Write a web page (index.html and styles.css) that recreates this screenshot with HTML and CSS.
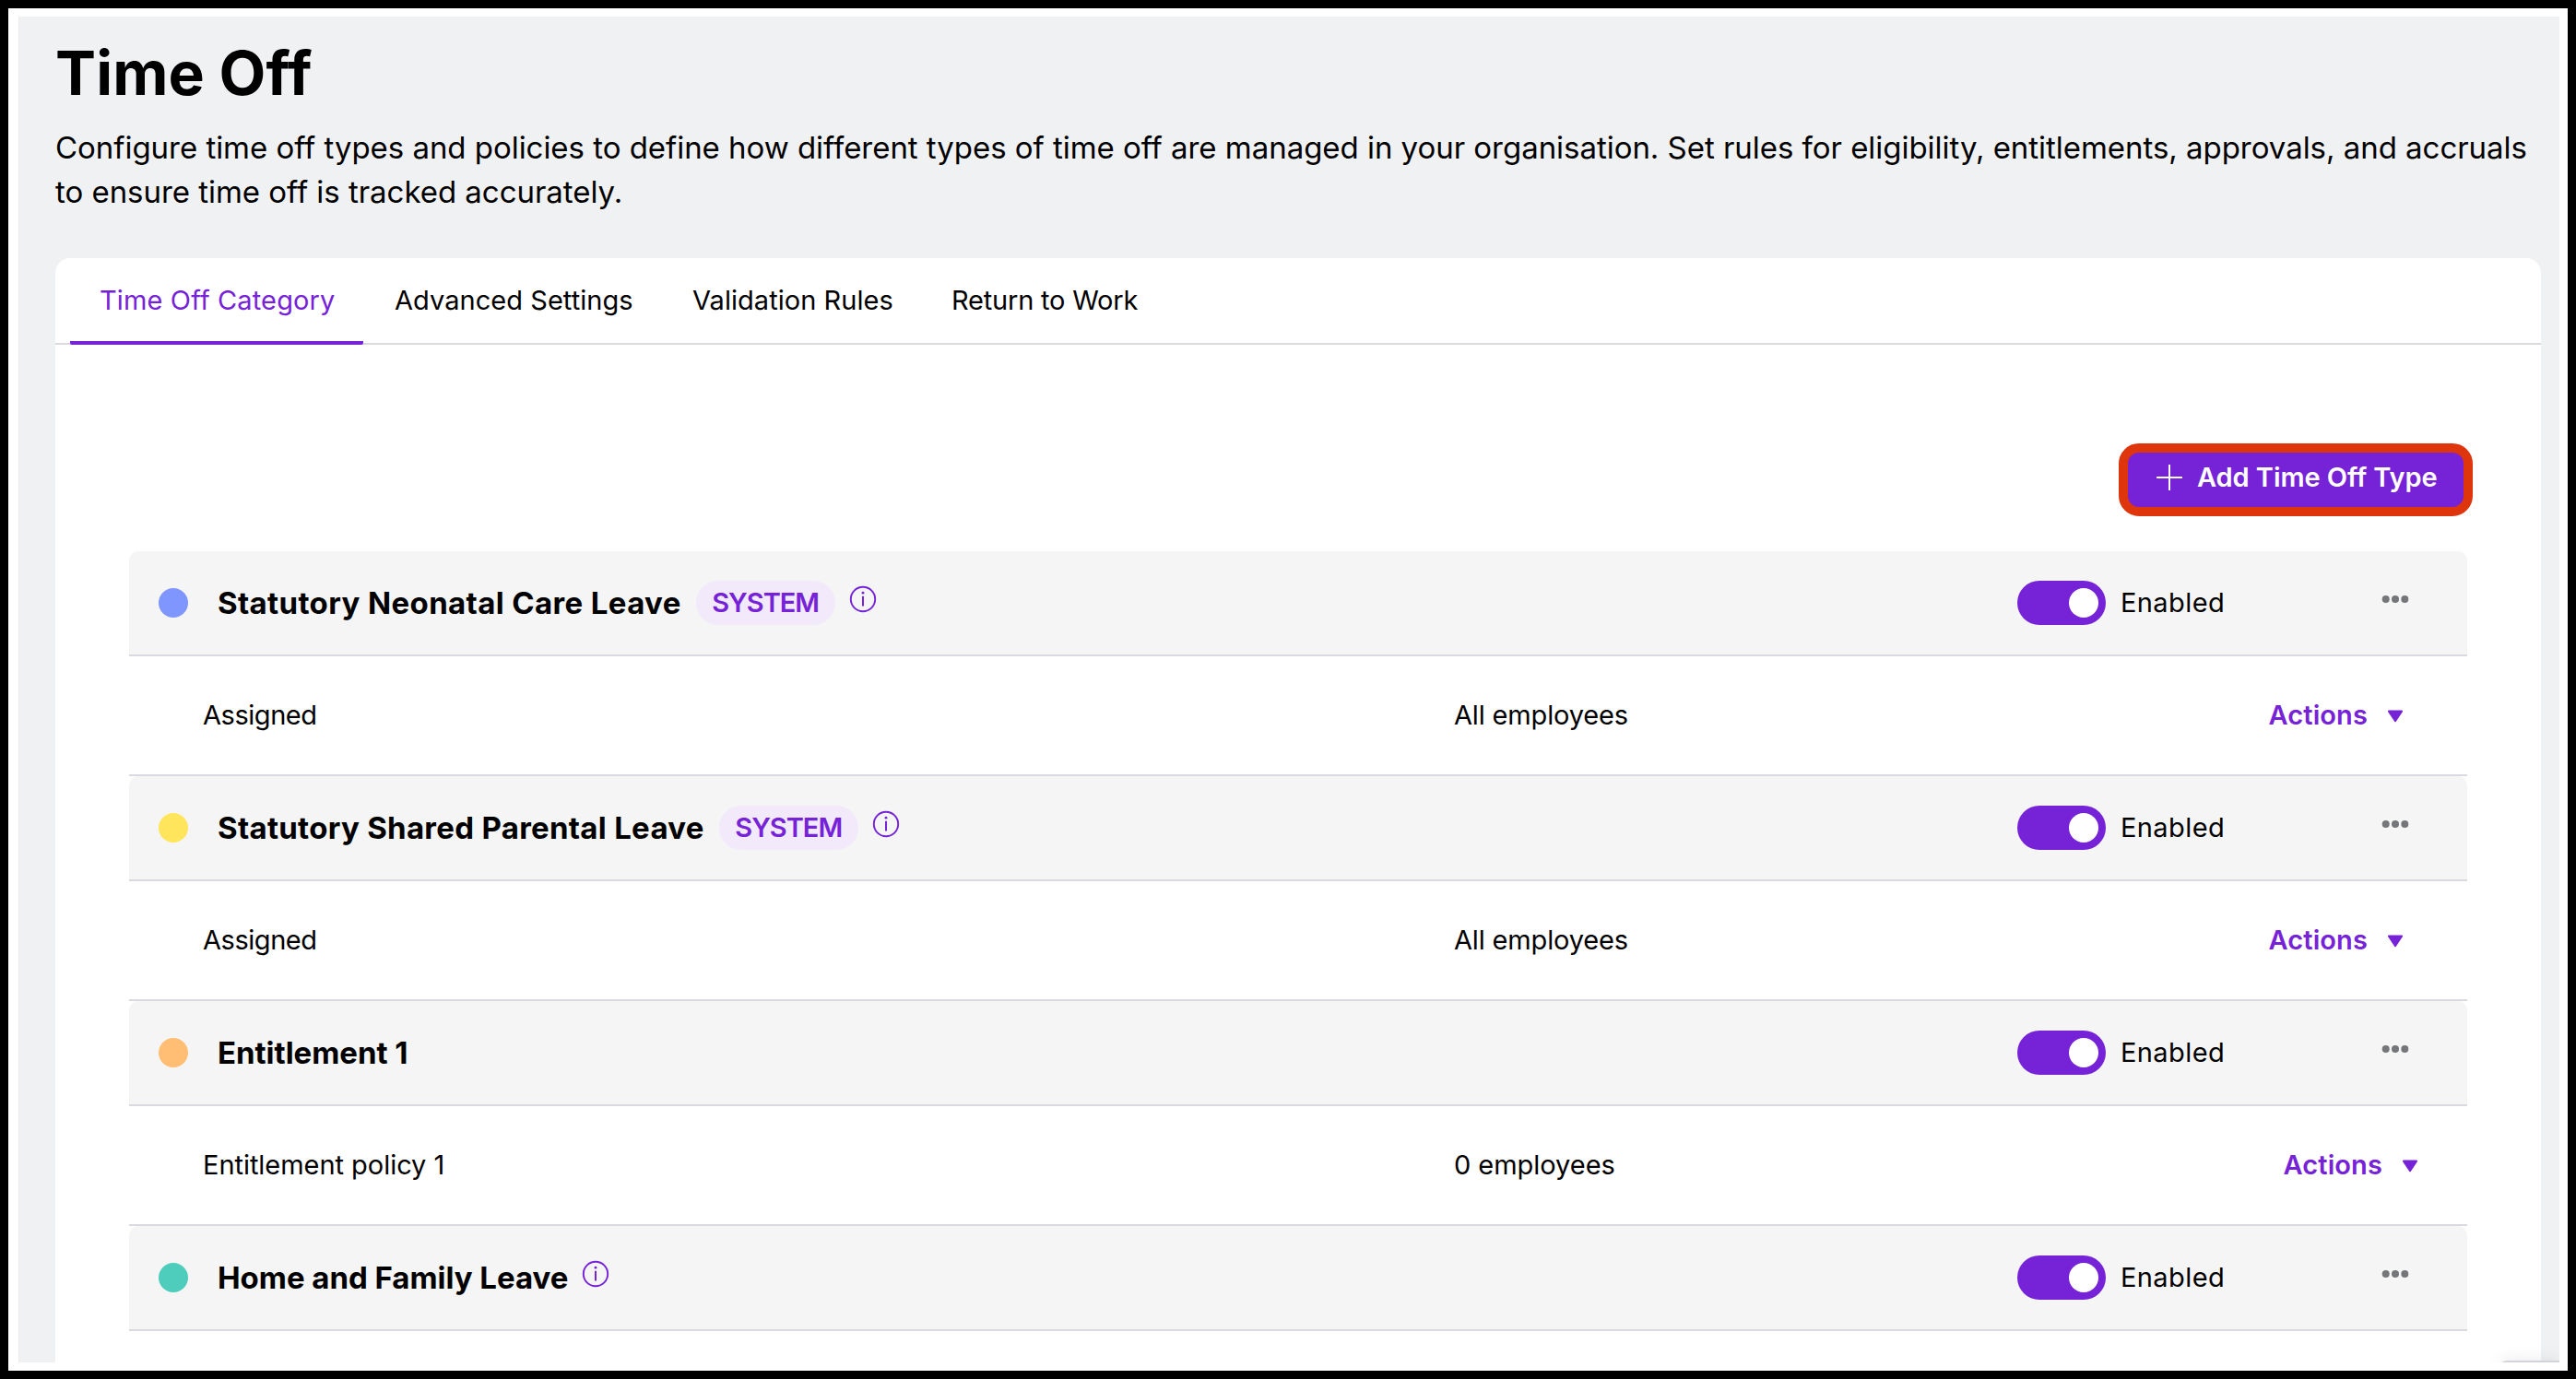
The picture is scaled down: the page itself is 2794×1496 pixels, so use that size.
FILE: index.html
```html
<!DOCTYPE html>
<html lang="en">
<head>
<meta charset="utf-8">
<title>Time Off</title>
<link rel="stylesheet" href="styles.css">
</head>
<body>
<svg class="sprite" aria-hidden="true">
  <symbol id="info" viewBox="0 0 30 30">
    <circle cx="15" cy="15" r="13.2" fill="none" stroke="currentColor" stroke-width="1.9"/>
    <circle cx="15" cy="8.2" r="1.4" fill="currentColor"/>
    <path d="M15 11.8v10.8" stroke="currentColor" stroke-width="2"/>
  </symbol>
  <symbol id="dots" viewBox="0 0 30 10">
    <circle cx="4.7" cy="5" r="4" fill="currentColor"/>
    <circle cx="15" cy="5" r="4" fill="currentColor"/>
    <circle cx="25.3" cy="5" r="4" fill="currentColor"/>
  </symbol>
  <symbol id="caret" viewBox="0 0 18 14">
    <path d="M2 1.6h14L9 12.2z" fill="currentColor" stroke="currentColor" stroke-width="2" stroke-linejoin="round"/>
  </symbol>
</svg>
<div class="frame">
  <main class="page">
    <h1 class="page-title">Time Off</h1>
    <p class="page-intro">Configure time off types and policies to define how different types of time off are managed in your organisation. Set rules for eligibility, entitlements, approvals, and accruals<br>to ensure time off is tracked accurately.</p>

    <section class="card">
      <nav class="tabs">
        <a class="tab tab-active">Time Off Category</a>
        <a class="tab">Advanced Settings</a>
        <a class="tab">Validation Rules</a>
        <a class="tab tab-tight">Return to Work</a>
      </nav>

      <div class="toolbar">
        <button class="add-button">
          <svg class="plus" viewBox="0 0 28 28"><path d="M14 0v28M0 14h28" stroke="currentColor" stroke-width="2"/></svg>
          <span>Add Time Off Type</span>
        </button>
      </div>

      <div class="list">
        <div class="type">
          <span class="swatch blue"></span>
          <h2 class="type-name">Statutory Neonatal Care Leave</h2>
          <span class="badge">SYSTEM</span>
          <svg class="info"><use href="#info"/></svg>
          <div class="controls"><span class="toggle"></span><span class="state">Enabled</span><svg class="dots"><use href="#dots"/></svg></div>
        </div>
        <div class="policy">
          <span class="assigned">Assigned</span>
          <span>All employees</span>
          <a class="actions">Actions<svg class="caret"><use href="#caret"/></svg></a>
        </div>

        <div class="type">
          <span class="swatch yellow"></span>
          <h2 class="type-name name-long">Statutory Shared Parental Leave</h2>
          <span class="badge">SYSTEM</span>
          <svg class="info"><use href="#info"/></svg>
          <div class="controls"><span class="toggle"></span><span class="state">Enabled</span><svg class="dots"><use href="#dots"/></svg></div>
        </div>
        <div class="policy">
          <span class="assigned">Assigned</span>
          <span>All employees</span>
          <a class="actions">Actions<svg class="caret"><use href="#caret"/></svg></a>
        </div>

        <div class="type">
          <span class="swatch orange"></span>
          <h2 class="type-name name-normal">Entitlement 1</h2>
          <div class="controls"><span class="toggle"></span><span class="state">Enabled</span><svg class="dots"><use href="#dots"/></svg></div>
        </div>
        <div class="policy policy-custom">
          <span>Entitlement policy 1</span>
          <span>0 employees</span>
          <a class="actions">Actions<svg class="caret"><use href="#caret"/></svg></a>
        </div>

        <div class="type">
          <span class="swatch teal"></span>
          <h2 class="type-name name-normal">Home and Family Leave</h2>
          <svg class="info"><use href="#info"/></svg>
          <div class="controls"><span class="toggle"></span><span class="state">Enabled</span><svg class="dots"><use href="#dots"/></svg></div>
        </div>
      </div>
    </section>
    <div class="corner-widget"></div>
  </main>
</div>
</body>
</html>
```
FILE: styles.css
```css
* {
  box-sizing: border-box;
  margin: 0;
  padding: 0;
}

body {
  height: 1496px;
  padding: 9px;
  background: #000;
  color: #000;
  font-family: Inter, "Liberation Sans", sans-serif;
  font-size: 29px;
  font-variant-ligatures: none;
  overflow: hidden;
}

.sprite {
  position: absolute;
  width: 0;
  height: 0;
}

.frame {
  height: 1478px;
  padding: 9px 9px 9px 11px;
  background: #fff;
}

.page {
  position: relative;
  display: flex;
  flex-direction: column;
  height: 1460px;
  padding: 21px 20px 0 39px;
  border-left: 1px solid #ececee;
  background: #f0f1f3;
  overflow: hidden;
}

.page-title {
  font-size: 66px;
  line-height: 80px;
  font-weight: 700;
  letter-spacing: 0.1px;
}

.page-intro {
  margin-top: 17px;
  font-size: 33px;
  line-height: 48px;
  letter-spacing: -0.036px;
  white-space: nowrap;
}

.card {
  flex: 1;
  margin-top: 48px;
  border-radius: 16px 16px 0 0;
  background: #fff;
}

.tabs {
  display: grid;
  grid-template-columns: 320px 323px 281px 270px;
  height: 94px;
  padding-left: 16px;
  border-bottom: 2px solid #d9d9de;
}

.tab {
  height: 94px;
  padding: 0 32px;
  line-height: 92px;
  letter-spacing: 0.04px;
  white-space: nowrap;
}

.tab-active {
  width: 318px;
  border-bottom: 4px solid #7622d7;
  border-radius: 0 0 2px 2px;
  color: #7622d7;
  letter-spacing: 0.13px;
}

.tab-tight {
  letter-spacing: -0.2px;
}

.toolbar {
  display: flex;
  justify-content: flex-end;
  padding: 107px 74px 38px 0;
}

.add-button {
  display: flex;
  align-items: center;
  gap: 16px;
  width: 384px;
  height: 79px;
  padding: 0 0 6px 31px;
  border: 10px solid #df350c;
  border-radius: 22px;
  background: #7622d7;
  color: #fff;
  font: 600 29px Inter, "Liberation Sans", sans-serif;
  letter-spacing: -0.08px;
  white-space: nowrap;
}

.plus {
  width: 28px;
  height: 28px;
}

.list {
  margin: 0 80px;
}

.type {
  display: flex;
  align-items: center;
  height: 114px;
  padding-left: 32px;
  border-bottom: 2px solid #d9d9e0;
  border-radius: 10px 10px 0 0;
  background: #f5f5f5;
}

.swatch {
  width: 32px;
  height: 32px;
  margin-right: 32px;
  border-radius: 50%;
}

.blue { background: #7f96ff; }
.yellow { background: #ffe55c; }
.orange { background: #ffbe73; }
.teal { background: #4fcdbc; }

.type-name {
  margin-right: 16px;
  font-size: 33px;
  line-height: 48px;
  font-weight: 700;
  letter-spacing: 0.37px;
}

.name-long {
  letter-spacing: 0.29px;
}

.name-normal {
  margin-right: 15px;
  letter-spacing: -0.03px;
}

.badge {
  width: 151px;
  height: 48px;
  margin-right: 15px;
  border-radius: 24px;
  background: #f2e9fb;
  color: #7622d7;
  font-weight: 600;
  line-height: 48px;
  letter-spacing: -1px;
  text-align: center;
}

.info {
  width: 30px;
  height: 30px;
  margin-bottom: 8px;
  color: #7622d7;
}

.controls {
  display: flex;
  align-items: center;
  width: 488px;
  margin-left: auto;
}

.toggle {
  width: 96px;
  height: 48px;
  padding: 8px;
  border-radius: 24px;
  background: #7622d7;
}

.toggle::before {
  content: "";
  display: block;
  width: 32px;
  height: 32px;
  margin-left: 48px;
  border-radius: 50%;
  background: #fff;
}

.state {
  width: 283px;
  margin-left: 16px;
  line-height: 48px;
  letter-spacing: 0.4px;
}

.dots {
  width: 30px;
  height: 10px;
  margin-bottom: 8px;
  color: #75767a;
}

.policy {
  display: grid;
  grid-template-columns: 1357px 1fr auto;
  align-items: center;
  height: 130px;
  padding: 0 69px 0 80px;
  border-bottom: 2px solid #d9d9e0;
  line-height: 48px;
  letter-spacing: -0.15px;
}

.policy-custom {
  letter-spacing: -0.04px;
  padding-right: 53px;
}

.assigned {
  letter-spacing: -0.45px;
}

.actions {
  display: flex;
  align-items: center;
  gap: 21px;
  color: #7622d7;
  font-weight: 600;
  letter-spacing: 0.1px;
}

.caret {
  width: 18px;
  height: 14px;
  margin-top: 2px;
}

/* Top edge of the docked help widget, which sits over the page corner. */
.corner-widget {
  position: absolute;
  right: 0;
  bottom: -10px;
  width: 65px;
  height: 12px;
  border-top: 2px solid #d3d3da;
  border-radius: 8px 0 0 0;
  background: #fff;
  box-shadow: 0 0 18px rgba(0, 0, 0, 0.1);
}
```
